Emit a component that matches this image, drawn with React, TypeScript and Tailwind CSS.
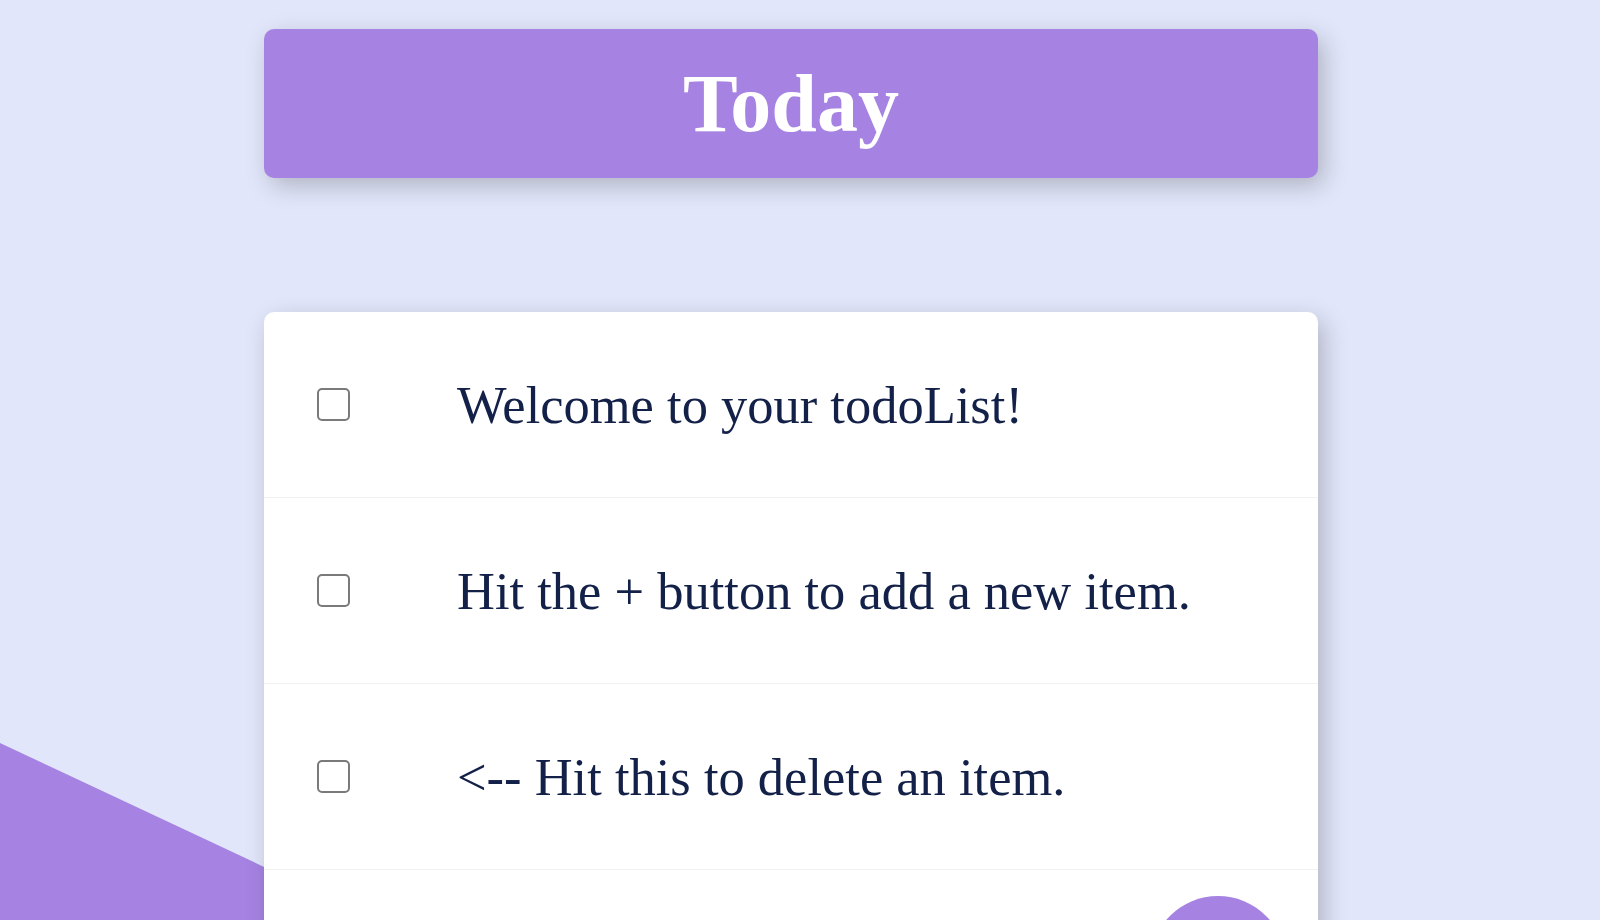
// Today todo list — header box, list card with checkbox rows, add row with round + button
import { Plus } from 'lucide-react';

const items = [
  'Welcome to your todoList!',
  'Hit the + button to add a new item.',
  '<-- Hit this to delete an item.',
];

export default function App() {
  return (
    <div className="relative h-[920px] overflow-hidden bg-[#e1e6fa] font-['Liberation_Serif',serif]">
      {/* Decorative background wedge, bottom left */}
      <svg
        className="pointer-events-none absolute left-0 top-0"
        width="1600"
        height="920"
        aria-hidden="true"
      >
        <polygon points="0,743 420,940 0,940" fill="#a683e3" />
      </svg>

      <div className="relative ml-[264px] flex w-[1054px] flex-col pt-[29px]">
        {/* Heading box */}
        <div className="flex h-[149px] items-center justify-center rounded-[10px] bg-[#a683e3] shadow-[6px_8px_24px_rgba(0,0,0,0.22)]">
          <h1 className="text-[82px] font-bold leading-none text-white">Today</h1>
        </div>

        {/* List card */}
        <div className="mt-[134px] rounded-[10px] bg-white shadow-[6px_8px_24px_rgba(0,0,0,0.22)]">
          {items.map((text) => (
            <div
              key={text}
              className="flex h-[186px] items-center border-b border-[#f1f1f1] pl-[53px]"
            >
              <span className="h-[33px] w-[33px] shrink-0 rounded-[5px] border-2 border-[#7a7a7a] bg-white" />
              <p className="ml-[107px] pt-[2px] text-[52.5px] leading-none text-[#132048]">
                {text}
              </p>
            </div>
          ))}

          {/* Add item row */}
          <form className="flex h-[186px] items-start justify-end pr-[32px] pt-[26px]">
            <input
              type="text"
              name="newItem"
              className="flex-1 bg-transparent outline-none"
              aria-label="New item"
            />
            <button
              type="button"
              aria-label="Add item"
              className="flex h-[136px] w-[136px] items-center justify-center rounded-full bg-[#a683e3] text-white"
            >
              <Plus size={56} aria-hidden="true" />
            </button>
          </form>
        </div>
      </div>
    </div>
  );
}
